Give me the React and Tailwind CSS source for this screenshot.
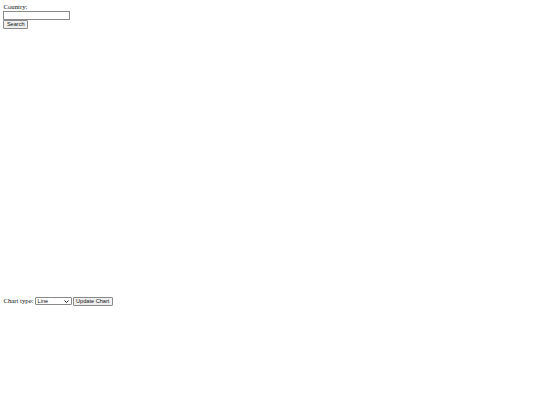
export default function App() {
  const serif = { fontFamily: '"Liberation Serif", "Times New Roman", serif' };
  return (
    <div className="p-[3.4px] bg-white min-h-[405px] text-[#111] text-[6.75px] leading-[7.8px]" style={serif}>
      <div>
        <label className="block">Country:</label>
        <input
          type="text"
          className="block w-[67px] h-[8.5px] border border-[#8a8a8a] bg-white px-[1px] text-[5.6px] font-['Liberation_Sans',sans-serif]"
        />
        <button className="block h-[9px] px-[2.5px] border border-[#8a8a8a] rounded-[1px] bg-[#efefef] text-[5.6px] leading-[7px] text-[#111] font-['Liberation_Sans',sans-serif]">
          Search
        </button>
      </div>
      <div className="h-[268px] w-[533px]"></div>
      <div className="flex items-center gap-[1px] h-[9px]">
        <span>Chart type:</span>
        <div className="relative w-[37px] h-[8.5px] border border-[#8a8a8a] rounded-[1px] bg-white flex items-center pl-[2px] text-[5.6px] leading-[6px] font-['Liberation_Sans',sans-serif]">
          Line
          <svg className="absolute right-[2px] top-[2.3px]" width="5" height="3" viewBox="0 0 10 6">
            <path d="M1 1 L5 5 L9 1" fill="none" stroke="#000" strokeWidth="1.8" />
          </svg>
        </div>
        <button className="h-[9px] px-[2.5px] border border-[#8a8a8a] rounded-[1px] bg-[#efefef] text-[5.6px] leading-[7px] text-[#111] font-['Liberation_Sans',sans-serif]">
          Update Chart
        </button>
      </div>
    </div>
  );
}
